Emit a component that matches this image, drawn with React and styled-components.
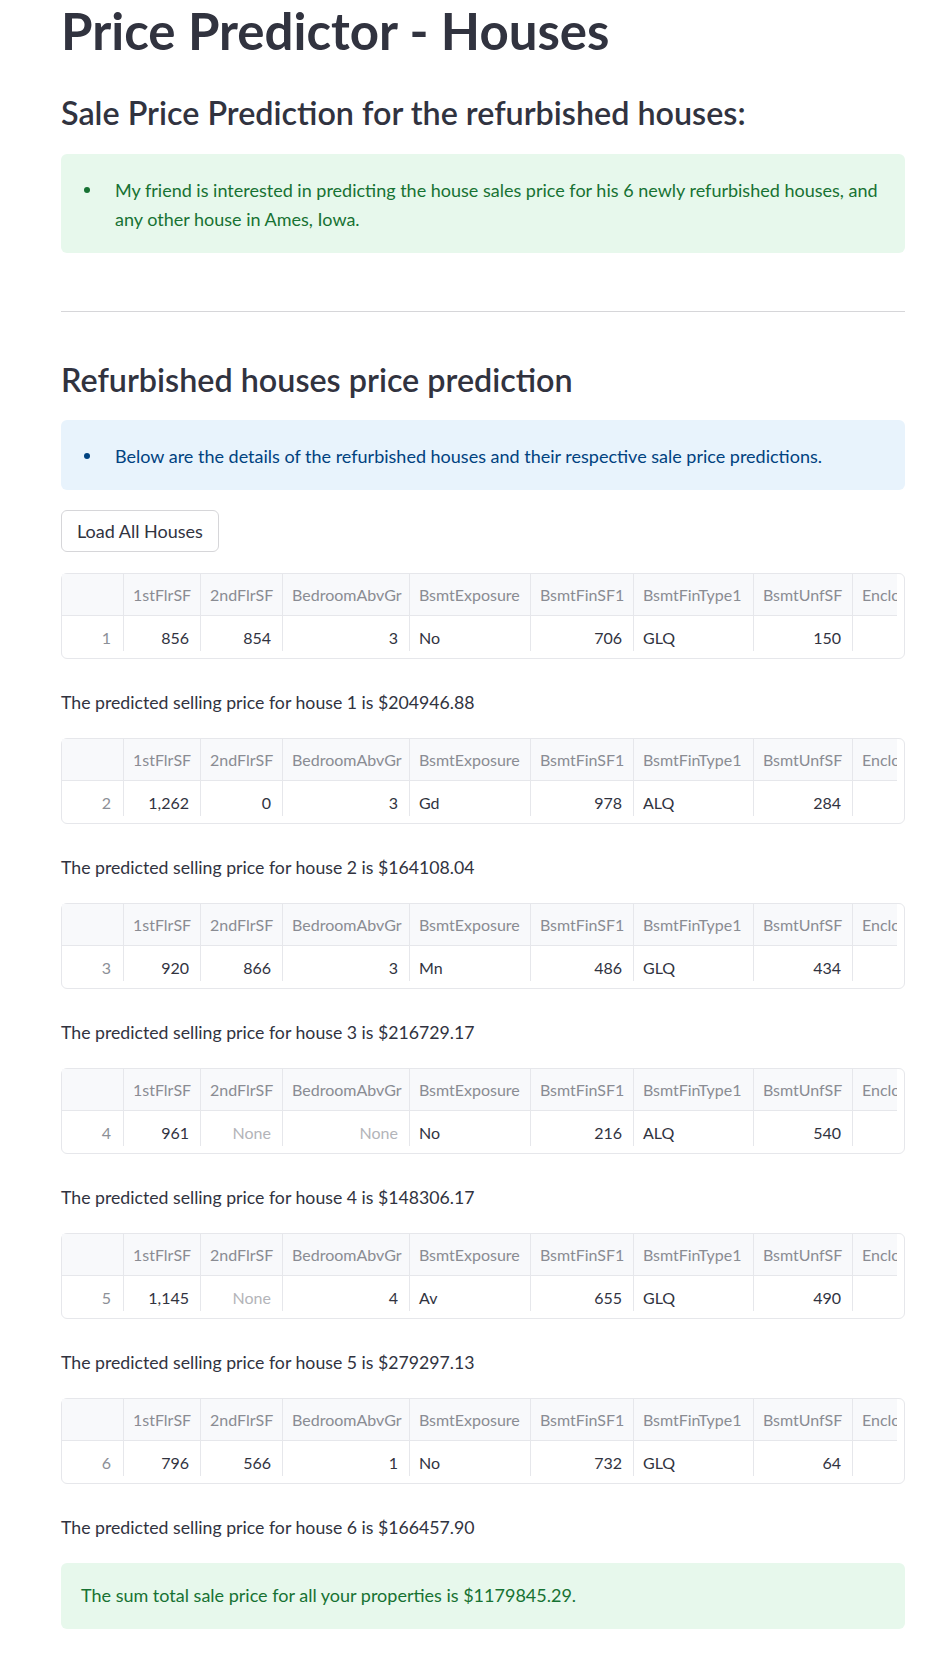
import React from 'react';
import styled, { createGlobalStyle } from 'styled-components';

const GlobalStyle = createGlobalStyle`
  body {
    margin: 0;
    background: #ffffff;
    font-family: Lato, "Liberation Sans", sans-serif;
    color: #31333f;
  }
`;

const columns = [
  { key: 'first', label: '1stFlrSF', width: 77, num: true },
  { key: 'second', label: '2ndFlrSF', width: 82, num: true },
  { key: 'bed', label: 'BedroomAbvGr', width: 127, num: true },
  { key: 'exp', label: 'BsmtExposure', width: 121 },
  { key: 'fin', label: 'BsmtFinSF1', width: 103, num: true },
  { key: 'type', label: 'BsmtFinType1', width: 120 },
  { key: 'unf', label: 'BsmtUnfSF', width: 99, num: true },
  { key: 'encl', label: 'EnclosedPorch', width: 140, num: true },
];

const houses = [
  { n: 1, first: '856', second: '854', bed: '3', exp: 'No', fin: '706', type: 'GLQ', unf: '150', encl: '0', price: '204946.88' },
  { n: 2, first: '1,262', second: '0', bed: '3', exp: 'Gd', fin: '978', type: 'ALQ', unf: '284', encl: '0', price: '164108.04' },
  { n: 3, first: '920', second: '866', bed: '3', exp: 'Mn', fin: '486', type: 'GLQ', unf: '434', encl: '0', price: '216729.17' },
  { n: 4, first: '961', second: null, bed: null, exp: 'No', fin: '216', type: 'ALQ', unf: '540', encl: '0', price: '148306.17' },
  { n: 5, first: '1,145', second: null, bed: '4', exp: 'Av', fin: '655', type: 'GLQ', unf: '490', encl: '0', price: '279297.13' },
  { n: 6, first: '796', second: '566', bed: '1', exp: 'No', fin: '732', type: 'GLQ', unf: '64', encl: '0', price: '166457.90' },
];

const gridTemplate = `62px ${columns.map((c) => c.width + 'px').join(' ')}`;

export default function App() {
  return (
    <>
      <GlobalStyle />
      <Page>
        <Title>Price Predictor - Houses</Title>
        <SubHeading $top={33}>Sale Price Prediction for the refurbished houses:</SubHeading>
        <Alert $top={21}>
          <BulletList>
            <li>
              <Dot />
              <span>
                My friend is interested in predicting the house sales price for his 6 newly refurbished
                houses, and any other house in Ames, Iowa.
              </span>
            </li>
          </BulletList>
        </Alert>

        <Divider />

        <SubHeading $top={49}>Refurbished houses price prediction</SubHeading>
        <Alert $tone="info" $top={20}>
          <BulletList>
            <li>
              <Dot />
              <span>
                Below are the details of the refurbished houses and their respective sale price predictions.
              </span>
            </li>
          </BulletList>
        </Alert>

        <Button>Load All Houses</Button>

        {houses.map((h) => (
          <React.Fragment key={h.n}>
            <TableFrame>
              <Viewport>
                <Grid>
                  <HeadCell />
                  {columns.map((c) => (
                    <HeadCell key={c.key}>{c.label}</HeadCell>
                  ))}
                  <IndexCell>{h.n}</IndexCell>
                  {columns.map((c) => (
                    <Cell key={c.key} $num={c.num} $empty={h[c.key] === null}>
                      {h[c.key] === null ? 'None' : h[c.key]}
                    </Cell>
                  ))}
                </Grid>
              </Viewport>
            </TableFrame>
            <PriceLine>
              The predicted selling price for house {h.n} is ${h.price}
            </PriceLine>
          </React.Fragment>
        ))}

        <Alert $plain $top={21}>The sum total sale price for all your properties is $1179845.29.</Alert>
      </Page>
    </>
  );
}

const Page = styled.main`
  width: 844px;
  margin-left: 61px;
  padding-bottom: 28px;
  display: flex;
  flex-direction: column;
`;

const Title = styled.h1`
  margin: 0;
  font-size: 51px;
  font-weight: 700;
  line-height: 1.2;
  color: #31333f;
`;

const SubHeading = styled.h2`
  margin: ${(p) => p.$top}px 0 0;
  font-size: 32.3px;
  font-weight: 600;
  line-height: 1.2;
  color: #31333f;
`;

const Alert = styled.div`
  margin-top: ${(p) => p.$top}px;
  padding: ${(p) => (p.$plain ? '18px 20px 19px' : '22px 20px 19px')};
  border-radius: 6px;
  background: ${(p) => (p.$tone === 'info' ? '#e8f3fc' : '#e7f8ec')};
  color: ${(p) => (p.$tone === 'info' ? '#004280' : '#177233')};
  font-size: 18px;
  line-height: 29px;
`;

const BulletList = styled.ul`
  margin: 0;
  padding: 0;
  list-style: none;

  li {
    display: flex;
    align-items: flex-start;
  }
`;

const Dot = styled.i`
  flex: 0 0 34px;
  height: 29px;
  display: flex;
  align-items: center;

  &::before {
    content: '';
    width: 6px;
    height: 6px;
    margin-left: 3px;
    border-radius: 50%;
    background: currentColor;
  }
`;

const Divider = styled.hr`
  margin: 58px 0 0;
  border: none;
  border-top: 1px solid #d6d6d9;
`;

const Button = styled.button`
  align-self: flex-start;
  margin-top: 20px;
  height: 42px;
  padding: 0 15px;
  background: #ffffff;
  border: 1px solid #d6d6d9;
  border-radius: 6px;
  font-family: inherit;
  font-size: 18px;
  white-space: nowrap;
  color: #31333f;
`;

const TableFrame = styled.div`
  margin-top: 21px;
  border: 1px solid #e6e7eb;
  border-radius: 6px;
  padding: 0 7px 7px 0;
  background: #ffffff;
`;

const Viewport = styled.div`
  width: 835px;
  height: 77px;
  overflow: hidden;
`;

const Grid = styled.div`
  display: grid;
  grid-template-columns: ${gridTemplate};
  grid-template-rows: 42px 43px;
  font-size: 16px;
`;

const HeadCell = styled.div`
  box-sizing: border-box;
  display: flex;
  align-items: center;
  padding: 0 9px;
  white-space: nowrap;
  overflow: hidden;
  background: #f8f9fb;
  color: #8a8c93;
  border-right: 1px solid #e6e7eb;
  border-bottom: 1px solid #e6e7eb;
`;

const IndexCell = styled.div`
  box-sizing: border-box;
  display: flex;
  align-items: center;
  justify-content: flex-end;
  padding: 0 12px;
  color: #8c8f97;
  border-right: 1px solid #e6e7eb;
`;

const Cell = styled.div`
  box-sizing: border-box;
  display: flex;
  align-items: center;
  justify-content: ${(p) => (p.$num ? 'flex-end' : 'flex-start')};
  padding: 0 11px 0 9px;
  white-space: nowrap;
  color: ${(p) => (p.$empty ? '#b3b4b9' : '#31333f')};
  border-right: 1px solid #e6e7eb;
`;

const PriceLine = styled.p`
  margin: 29px 0 0;
  font-size: 17.7px;
  line-height: 29px;
  color: #31333f;
`;
